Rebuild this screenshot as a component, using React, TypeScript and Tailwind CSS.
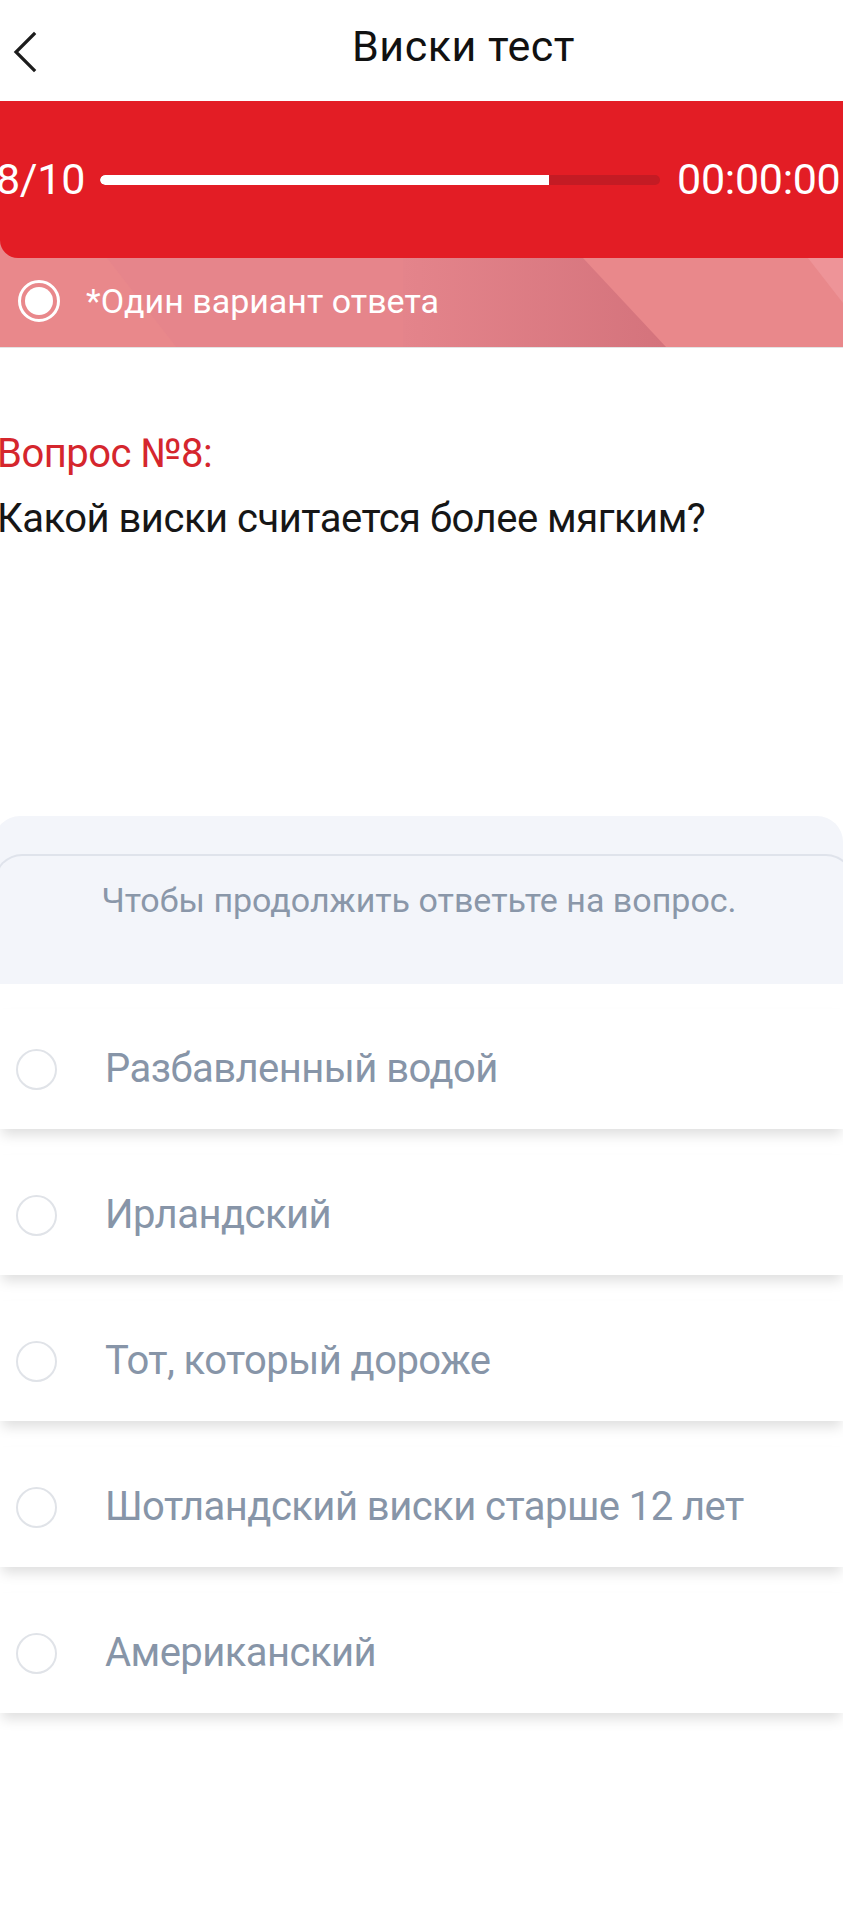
const answers = [
  'Разбавленный водой',
  'Ирландский',
  'Тот, который дороже',
  'Шотландский виски старше 12 лет',
  'Американский',
]

export default function App() {
  return (
    <div className="w-[843px] min-h-[1920px] bg-white overflow-hidden font-['Roboto',sans-serif]">
      {/* header */}
      <div className="relative h-[101px] flex items-center justify-center pl-[84px] pb-[9px]">
        <svg className="absolute left-[12px] top-[31px]" width="26" height="42" viewBox="0 0 26 42">
          <path d="M22 3 L4 21 L22 39" fill="none" stroke="#1c1c1c" strokeWidth="3.2" strokeLinecap="square" />
        </svg>
        <h1 className="text-[43px] leading-none text-[#111] tracking-[0.5px]">Виски тест</h1>
      </div>

      {/* progress block */}
      <div className="relative bg-[#e9888b]">
        <svg className="absolute left-0 bottom-0" width="843" height="90" viewBox="0 0 843 90">
          <defs>
            <linearGradient id="dk" x1="0" x2="1" y1="0" y2="0">
              <stop offset="0" stopColor="#e4848b" />
              <stop offset="1" stopColor="#d4737c" />
            </linearGradient>
          </defs>
          <polygon points="107,0 403,0 403,90 177,90" fill="#e6858b" />
          <polygon points="403,0 583,0 667,90 403,90" fill="url(#dk)" />
          <polygon points="808,0 843,0 843,45" fill="#ee9498" />
        </svg>
        <div className="relative h-[157px] bg-[#e31d25] rounded-bl-[18px] flex items-center text-white text-[43px] leading-none whitespace-nowrap">
          <span className="ml-[-4px] tracking-[-0.3px]">8/10</span>
          <div className="ml-[15px] w-[560px] h-[10px] rounded-full bg-[#c41b24] overflow-hidden shrink-0">
            <div className="w-[449px] h-full bg-white rounded-l-full" />
          </div>
          <span className="ml-[17px] tracking-[-0.3px]">00:00:00</span>
        </div>
        <div className="relative h-[90px] flex items-center pl-[18px] pb-[3px] border-b border-[#e4e4e4]">
          <div className="w-[42px] h-[42px] rounded-full border-[3px] border-white flex items-center justify-center">
            <div className="w-[28px] h-[28px] rounded-full bg-white" />
          </div>
          <span className="ml-[26px] text-[34px] text-white">*Один вариант ответа</span>
        </div>
      </div>

      {/* question */}
      <div className="mt-[73px] ml-[-3px] text-[40px] leading-[65px] tracking-[-0.5px]">
        <p className="text-[#d5262d]">Вопрос №8:</p>
        <p className="text-[#161616]">Какой виски считается более мягким?</p>
      </div>

      {/* hint */}
      <div className="mt-[265px] h-[168px] ml-[-6px] bg-[#f3f5fa] rounded-t-[26px]">
        <div className="mt-[38px] h-[130px] inline-block w-[860px] border-t-2 border-l-2 border-r-2 border-[#dfe3eb] rounded-t-[28px] pt-[19px] text-center">
          <span className="text-[34px] text-[#8a97a9] ml-[-10px]">Чтобы продолжить ответьте на вопрос.</span>
        </div>
      </div>

      {/* answers */}
      <div className="mt-[25px] flex flex-col gap-[26px]">
        {answers.map((a) => (
          <div
            key={a}
            className="h-[120px] bg-white flex items-center shadow-[0_8px_12px_-2px_rgba(0,0,0,0.13)]"
          >
            <div className="ml-[16px] w-[41px] h-[41px] rounded-full border-2 border-[#e0e3e8] shrink-0" />
            <span className="ml-[48px] text-[40px] text-[#8795a8] tracking-[-0.55px]">{a}</span>
          </div>
        ))}
      </div>
    </div>
  )
}
